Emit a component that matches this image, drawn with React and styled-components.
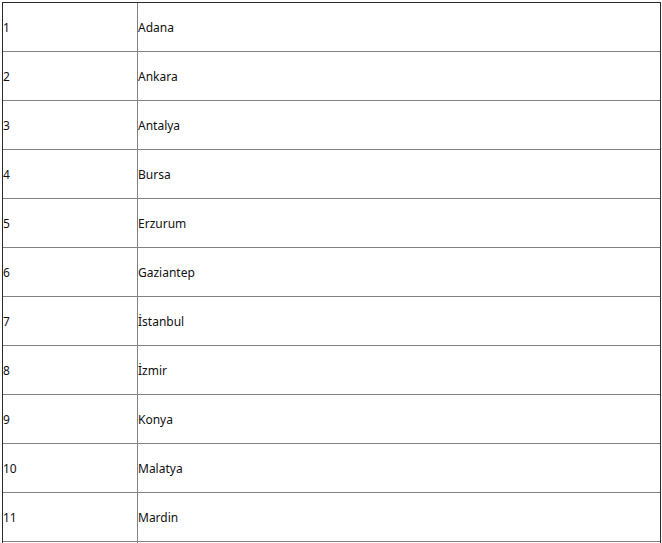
import React from 'react'
import styled, { createGlobalStyle } from 'styled-components'

const GlobalStyle = createGlobalStyle`
  html {
    overflow: hidden;
  }
  body {
    margin: 0;
    background: #ffffff;
    font-family: "Noto Sans", "Open Sans", sans-serif;
  }
`

const Page = styled.div`
  padding: 2px;
`

const Table = styled.table`
  width: 659px;
  table-layout: fixed;
  border-collapse: separate;
  border-spacing: 0;
  border: 1px solid #2b2b2b;
  border-bottom: none;
`

const Cell = styled.td`
  box-sizing: border-box;
  width: ${props => props.narrow ? '135px' : 'auto'};
  height: 49px;
  padding: 0;
  font-size: 12px;
  color: #111;
  vertical-align: middle;
  border-bottom: 1px solid #828282;
  border-right: ${props => props.narrow ? '1px solid #828282' : 'none'};
`

const cities = [
  'Adana', 'Ankara', 'Antalya', 'Bursa', 'Erzurum', 'Gaziantep',
  'İstanbul', 'İzmir', 'Konya', 'Malatya', 'Mardin'
]

export default function App() {
  return (
    <>
      <GlobalStyle />
      <Page>
        <Table>
          <tbody>
            {cities.map((city, i) => (
              <tr key={city}>
                <Cell narrow>{i + 1}</Cell>
                <Cell>{city}</Cell>
              </tr>
            ))}
            {/* next row starts just below the frame; only its borders show */}
            <tr>
              <Cell narrow />
              <Cell />
            </tr>
          </tbody>
        </Table>
      </Page>
    </>
  )
}
